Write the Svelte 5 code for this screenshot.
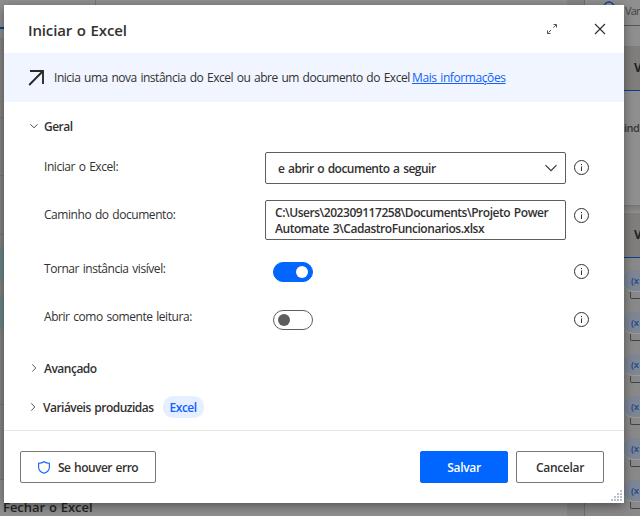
<script>
  let visible = $state(true);
  let readOnly = $state(false);
  const chips = [0, 1, 2, 3, 4, 5];
</script>

{#snippet info()}
  <svg class="info" width="16" height="16" viewBox="0 0 16 16">
    <circle cx="8.500" cy="7.500" r="7" fill="none" stroke="#323130" stroke-width="1" />
    <path d="M8.500 6.500V11M8.500 4v1.200" stroke="#323130" stroke-width="1" fill="none" />
  </svg>
{/snippet}

<div class="screen">
  <div class="canvas">
    <div class="tabs"></div>
    <div class="cards">
      <div class="step s1"></div>
      <div class="step s2"></div>
      <div class="step s3"></div>
      <div class="step s4"></div>
      <div class="step teal"></div>
      <div class="step gap"></div>
      <div class="step teal"></div>
      <div class="step s5"></div>
      <div class="step s6"></div>
      <div class="step last">Fechar o Excel</div>
    </div>
  </div>
  <div class="scroll"></div>
  <aside>
    <div class="search">
      <svg width="12" height="14" viewBox="0 0 12 14"><circle cx="6" cy="8" r="5" fill="none" stroke="#123f91" stroke-width="1.3" /></svg>
      <span>Var</span>
    </div>
    <div class="space"></div>
    <div class="head">V</div>
    <div class="empty">ind</div>
    <div class="shade"></div>
    <div class="head">V</div>
    <div class="vars">
      {#each chips as chip (chip)}
        <div class="var"><div class="pill">(x</div><div class="box"></div></div>
      {/each}
    </div>
  </aside>

  <div class="dialog" role="dialog" aria-label="Iniciar o Excel">
    <header>
      <h1>Iniciar o Excel</h1>
      <svg class="expand" width="10" height="10" viewBox="0 0 10 10" fill="none" stroke="#55534f" stroke-width="1">
        <path d="M6.500 .5h3V3.500M3.500 9.500H.5V6.500" />
        <path d="M9.200 .8 6 4M4 6 .8 9.200" stroke-dasharray="3 .6" />
      </svg>
      <svg class="close" width="12" height="12" viewBox="0 0 12 12"><path d="M1 1 11 11M11 1 1 11" stroke="#323130" stroke-width="1.15" /></svg>
    </header>

    <div class="banner">
      <svg width="18" height="18" viewBox="0 0 18 18"><path d="M2 2h13v13M15 2 1.200 16" fill="none" stroke="#2b2a28" stroke-width="1.900" /></svg>
      <span class="desc">Inicia uma nova instância do Excel ou abre um documento do Excel</span>
      <span class="link">Mais informações</span>
    </div>

    <main>
      <div class="section general">
        <svg width="8" height="8" viewBox="0 0 8 8"><path d="M.3 2.2 4 5.8 7.7 2.2" /></svg>
        <span class="t-geral">Geral</span>
      </div>
      <div class="row r1">
        <span class="label">Iniciar o Excel:</span>
        <div class="field select">
          <span>e abrir o documento a seguir</span>
          <svg width="12" height="8" viewBox="0 0 12 8"><path d="M.5 1.2 6 6.7 11.5 1.2" fill="none" stroke="#323130" stroke-width="1.1" /></svg>
        </div>
        {@render info()}
      </div>
      <div class="row r2">
        <span class="label">Caminho do documento:</span>
        <div class="field path">
          <span>C:\Users\202309117258\Documents\Projeto Power</span>
          <span>Automate 3\CadastroFuncionarios.xlsx</span>
        </div>
        {@render info()}
      </div>
      <div class="row r3">
        <span class="label">Tornar instância visível:</span>
        <button class="toggle" class:on={visible} aria-label="Tornar instância visível" onclick={() => (visible = !visible)}><i></i></button>
        {@render info()}
      </div>
      <div class="row r4">
        <span class="label">Abrir como somente leitura:</span>
        <button class="toggle" class:on={readOnly} aria-label="Abrir como somente leitura" onclick={() => (readOnly = !readOnly)}><i></i></button>
        {@render info()}
      </div>
      <div class="section advanced">
        <svg width="8" height="8" viewBox="0 0 8 8"><path d="M2.2 .3 5.8 4 2.2 7.7" /></svg>
        <span class="t-adv">Avançado</span>
      </div>
      <div class="section produced">
        <svg width="8" height="8" viewBox="0 0 8 8"><path d="M2.2 .3 5.8 4 2.2 7.7" /></svg>
        <span class="t-prod">Variáveis produzidas</span>
        <span class="tag">Excel</span>
      </div>
    </main>

    <footer>
      <button class="btn error">
        <svg width="12" height="13" viewBox="0 0 12 13"><path d="M6 .7C4.5 1.8 2.6 2.3.6 2.3v3.6c0 3 2 5.2 5.4 6.4 3.400-1.200 5.400-3.400 5.400-6.400V2.300C9.400 2.300 7.500 1.800 6 .7Z" fill="none" stroke="#0f62fe" stroke-width="1.100" /></svg>
        <span>Se houver erro</span>
      </button>
      <button class="btn primary"><span>Salvar</span></button>
      <button class="btn cancel"><span>Cancelar</span></button>
    </footer>
    <svg class="grip" width="12" height="12" viewBox="0 0 12 12" fill="#b9c0d4">
      {#each [[9, 0], [6, 3], [9, 3], [3, 6], [6, 6], [9, 6], [0, 9], [3, 9], [6, 9], [9, 9]] as [x, y]}
        <rect {x} {y} width="2" height="2" />
      {/each}
    </svg>
  </div>
</div>

<style>
  :global(body) { margin: 0; }
  .screen, .screen * { box-sizing: border-box; }
  .screen { position: relative; display: flex; width: 640px; height: 516px; overflow: hidden; background: #8f8f8f; font-family: "Open Sans", "Noto Sans", sans-serif; font-size: 12px; color: #323130; white-space: nowrap; }
  .canvas { width: 567px; display: flex; flex-direction: column; }
  .tabs { height: 29px; flex: none; border-bottom: 2px solid #0b3f96; background: linear-gradient(90deg, transparent 95px, #777 95px, #777 96px, transparent 96px); }
  .cards { flex: 1; padding-top: 9px; display: flex; flex-direction: column; }
  .step { flex: none; background: #868482; border-bottom: 1px solid #777; }
  .s1 { height: 80px; } .s2 { height: 58px; } .s3 { height: 59px; }
  .s4 { height: 12px; border: 0; }
  .teal { height: 34px; background: #6c8786; border: 0; }
  .gap { height: 14px; border: 0; }
  .s5 { height: 76px; } .s6 { height: 75px; }
  .last { height: 36px; padding: 18px 0 0 3px; background: #8f8f8f; border: 0; color: #252525; font-size: 13px; line-height: 18px; font-weight: 600; letter-spacing: -0.05px; word-spacing: .6px; }
  .scroll { width: 17px; background: #858585; }
  aside { width: 56px; overflow: hidden; border-left: 1px solid #6e6e6e; display: flex; flex-direction: column; }
  .search { height: 26px; flex: none; padding-left: 18px; display: flex; gap: 10px; border-bottom: 1px solid #555; line-height: 22px; font-size: 11px; letter-spacing: -0.8px; color: #444; }
  .search svg { flex: none; margin-top: -1px; }
  .space { height: 20px; flex: none; }
  .head { height: 45px; flex: none; padding-left: 49px; border-bottom: 1px solid #0b3f96; background: #807e7c; color: #222; font-weight: 700; font-size: 12px; line-height: 44px; letter-spacing: -2px; }
  .empty { height: 115px; flex: none; padding: 28px 0 0 39px; line-height: 18px; color: #383838; font-weight: 600; font-size: 11px; letter-spacing: -0.5px; border-bottom: 1px solid #777; }
  .shade { height: 7px; flex: none; background: linear-gradient(#7b7b7b, #8f8f8f); }
  .vars { padding: 12px 0 0 38px; display: flex; flex-direction: column; background: #898989; flex: 1; }
  .var { height: 42px; flex: none; }
  .pill { height: 22px; width: 60px; padding-left: 8px; border-radius: 11px; background: #7c8695; border-bottom: 1px solid #999; color: #214791; font-weight: 600; font-size: 9.5px; letter-spacing: -0.3px; line-height: 21px; }
  .box { height: 7px; width: 40px; margin-left: 7px; border: 1px solid #444; border-top: 0; border-radius: 0 0 2px 2px; }

  .dialog { position: absolute; left: 4px; top: 5px; width: 620px; height: 498px; display: flex; flex-direction: column; background: #fff; box-shadow: 0 3px 10px rgba(0, 0, 0, .42); }
  header { height: 48px; flex: none; display: flex; align-items: center; padding: 2px 18px 0 24px; }
  h1 { flex: 1; margin: 0; padding-bottom: 1px; font-size: 15px; line-height: 20px; font-weight: 600; letter-spacing: -0.15px; word-spacing: 1px; }
  .expand { margin-right: 37px; margin-top: -2px; }
  .close { margin-top: -3px; }
  .banner { height: 49px; flex: none; display: flex; align-items: center; padding-left: 24px; background: #f0f5ff; }
  .banner svg { margin-right: 8px; }
  .banner span { line-height: 16px; padding-top: 1px; }
  .desc { width: 358px; letter-spacing: -0.47px; word-spacing: 1px; }
  .link { color: #0f62fe; text-decoration: underline; letter-spacing: -0.41px; word-spacing: 1px; }
  main { flex: none; height: 329px; border-bottom: 1px solid #e6e6e6; }
  .section { display: flex; align-items: center; padding-left: 26px; height: 22px; font-weight: 600; }
  .section svg { margin-right: 6px; fill: none; stroke: #444; stroke-width: .9; }
  .general { margin-top: 13px; }
  .t-geral { letter-spacing: -0.5px; }
  .t-adv { letter-spacing: -0.5px; }
  .t-prod { letter-spacing: -0.52px; word-spacing: 1px; }
  .row { display: flex; align-items: flex-start; padding-left: 40px; }
  .row .label { width: 221px; line-height: 16px; letter-spacing: -0.44px; word-spacing: 1px; }
  .info { margin-left: 7px; margin-top: 8px; flex: none; }
  .row { height: 48px; }
  .r1 { margin-top: 15px; }
  .r1 .label, .r2 .label { padding-top: 7px; }
  .r3 .label, .r4 .label { padding-top: 13px; width: 229px; }
  .r3 .info, .r4 .info { margin: 16px 0 0 260px; }
  .field { width: 301px; flex: none; border: 1px solid #605e5c; border-radius: 2px; font-weight: 600; }
  .select { height: 32px; display: flex; align-items: center; justify-content: space-between; padding: 0 8px 0 12px; letter-spacing: -0.51px; word-spacing: 1px; }
  .select span { padding-top: 1px; }
  .path { height: 40px; display: flex; flex-direction: column; padding: 4px 9px; line-height: 16px; }
  .path span { letter-spacing: -0.46px; word-spacing: 1px; }
  .toggle { flex: none; width: 40px; height: 20px; margin-top: 14px; padding: 0 4px; display: flex; align-items: center; border: 1px solid #605e5c; border-radius: 10px; background: #fff; }
  .toggle i { width: 12px; height: 12px; border-radius: 50%; background: #605e5c; }
  .toggle.on { justify-content: flex-end; background: #0066ff; border-color: #0066ff; }
  .toggle.on i { background: #fff; }
  .advanced { margin-top: 13px; }
  .produced { margin-top: 17px; padding-left: 25px; }
  .tag { margin-left: 9px; height: 22px; width: 41px; border-radius: 10px; text-align: center; line-height: 23px; background: #e5efff; color: #0f62fe; letter-spacing: -0.5px; }
  footer { height: 72px; display: flex; align-items: center; padding: 0 20px 0 16px; }
  .btn { height: 32px; width: 88px; display: flex; align-items: center; justify-content: center; padding: 0; border: 1px solid #777; border-radius: 2px; background: #fff; font: 600 12px/16px "Open Sans", "Noto Sans", sans-serif; color: #323130; letter-spacing: -0.32px; }
  .btn span { padding-top: 1px; }
  .error { width: 136px; justify-content: flex-start; padding-left: 17px; margin-right: auto; }
  .error span { letter-spacing: -0.52px; word-spacing: 1px; }
  .error svg { margin-right: 8px; }
  .primary { border-color: #0066ff; background: #0066ff; color: #fff; margin-right: 8px; }
  .grip { position: absolute; right: 1px; bottom: 1px; }
</style>
